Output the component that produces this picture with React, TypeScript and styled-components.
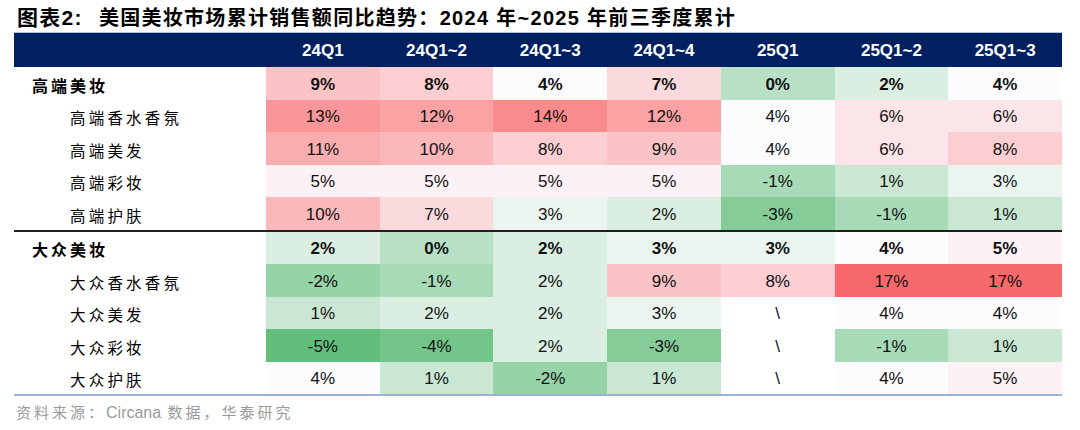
import React from 'react';
import styled, { createGlobalStyle } from 'styled-components';

const colors = {
  navy: '#002060',
  rule: '#1f1f1f',
  softLine: '#b4c4dd',
  bottomLine: '#9db2d2',
  footer: '#9a9a9a',
};

const latin = '"Liberation Sans", Arial';
const cjk = '"Noto Sans CJK SC"';

const GlobalStyle = createGlobalStyle`
  body {
    margin: 0;
    background: #ffffff;
    font-family: ${latin}, ${cjk}, sans-serif;
    color: #000;
  }
`;

const Page = styled.div`
  width: 1080px;
  height: 430px;
  padding-left: 14px;
  box-sizing: border-box;
  overflow: hidden;
`;

const Title = styled.div`
  height: 32px;
  display: flex;
  align-items: center;
  padding-left: 3px;
  font-size: 20px;
  font-weight: bold;
  letter-spacing: 1.3px;
  white-space: nowrap;
`;

const TitleNo = styled.span`
  font-size: 21px;
  margin-right: 16px;
`;

const Table = styled.div`
  width: 1048px;
  border-top: 1px solid ${colors.softLine};
`;

const Row = styled.div<{ $h: number }>`
  display: grid;
  grid-template-columns: 252px repeat(7, 1fr);
  height: ${(p) => p.$h}px;
`;

const HeaderRow = styled(Row)`
  background: ${colors.navy};
`;

const HeadCell = styled.div`
  display: flex;
  align-items: center;
  justify-content: center;
  padding-top: 2px;
  color: #fff;
  font-size: 17px;
  font-weight: bold;
`;

const Label = styled.div<{ $group?: boolean }>`
  display: flex;
  align-items: center;
  padding-top: 3px;
  padding-left: ${(p) => (p.$group ? 18 : 56)}px;
  font-family: ${cjk}, sans-serif;
  font-size: ${(p) => (p.$group ? 16 : 15.5)}px;
  font-weight: ${(p) => (p.$group ? 'bold' : 'normal')};
  letter-spacing: ${(p) => (p.$group ? 3 : 3.2)}px;
`;

const Cell = styled.div<{ $bg: string; $bold?: boolean }>`
  display: flex;
  align-items: center;
  justify-content: center;
  padding-top: 3px;
  background: ${(p) => p.$bg};
  font-size: 17px;
  font-weight: ${(p) => (p.$bold ? 'bold' : 'normal')};
  color: #111;
`;

const Rule = styled.div<{ $color: string }>`
  height: 2px;
  background: ${(p) => p.$color};
`;

const Footer = styled.div`
  padding-top: 6px;
  padding-left: 2px;
  line-height: 20px;
  font-size: 15px;
  color: ${colors.footer};
  font-family: ${cjk}, sans-serif;
  letter-spacing: 3px;
`;

const Latin = styled.span`
  font-family: ${latin}, sans-serif;
  letter-spacing: 0;
  font-size: 16px;
`;

type Line = { label: string; group?: boolean; values: (number | null)[] };

const columns = ['24Q1', '24Q1~2', '24Q1~3', '24Q1~4', '25Q1', '25Q1~2', '25Q1~3'];

const upper: Line[] = [
  { label: '高端美妆', group: true, values: [9, 8, 4, 7, 0, 2, 4] },
  { label: '高端香水香氛', values: [13, 12, 14, 12, 4, 6, 6] },
  { label: '高端美发', values: [11, 10, 8, 9, 4, 6, 8] },
  { label: '高端彩妆', values: [5, 5, 5, 5, -1, 1, 3] },
  { label: '高端护肤', values: [10, 7, 3, 2, -3, -1, 1] },
];

const lower: Line[] = [
  { label: '大众美妆', group: true, values: [2, 0, 2, 3, 3, 4, 5] },
  { label: '大众香水香氛', values: [-2, -1, 2, 9, 8, 17, 17] },
  { label: '大众美发', values: [1, 2, 2, 3, null, 4, 4] },
  { label: '大众彩妆', values: [-5, -4, 2, -3, null, -1, 1] },
  { label: '大众护肤', values: [4, 1, -2, 1, null, 4, 5] },
];

// three colour scale: green (min) -> white (mid) -> red (max)
const MIN = -5;
const MID = 4;
const MAX = 17;
const green = [99, 190, 123];
const white = [252, 252, 255];
const red = [248, 105, 107];

function heat(v: number | null) {
  if (v === null) return '#ffffff';
  const [to, t] = v >= MID ? [red, (v - MID) / (MAX - MID)] : [green, (MID - v) / (MID - MIN)];
  const mix = white.map((c, i) => Math.round(c + (to[i] - c) * t));
  return `rgb(${mix.join(',')})`;
}

const BodyRows: React.FC<{ lines: Line[] }> = ({ lines }) => (
  <>
    {lines.map((line) => (
      <Row $h={32.5} key={line.label}>
        <Label $group={line.group}>{line.label}</Label>
        {line.values.map((v, i) => (
          <Cell key={i} $bg={heat(v)} $bold={line.group}>
            {v === null ? '\\' : `${v}%`}
          </Cell>
        ))}
      </Row>
    ))}
  </>
);

export default function App() {
  return (
    <Page>
      <GlobalStyle />
      <Title>
        <TitleNo>图表2:</TitleNo>美国美妆市场累计销售额同比趋势：2024 年~2025 年前三季度累计
      </Title>
      <Table>
        <HeaderRow $h={34}>
          <div />
          {columns.map((c) => (
            <HeadCell key={c}>{c}</HeadCell>
          ))}
        </HeaderRow>
        <BodyRows lines={upper} />
        <Rule $color={colors.rule} />
        <BodyRows lines={lower} />
        <Rule $color={colors.bottomLine} />
      </Table>
      <Footer>
        资料来源：<Latin>Circana</Latin> 数据，华泰研究
      </Footer>
    </Page>
  );
}
